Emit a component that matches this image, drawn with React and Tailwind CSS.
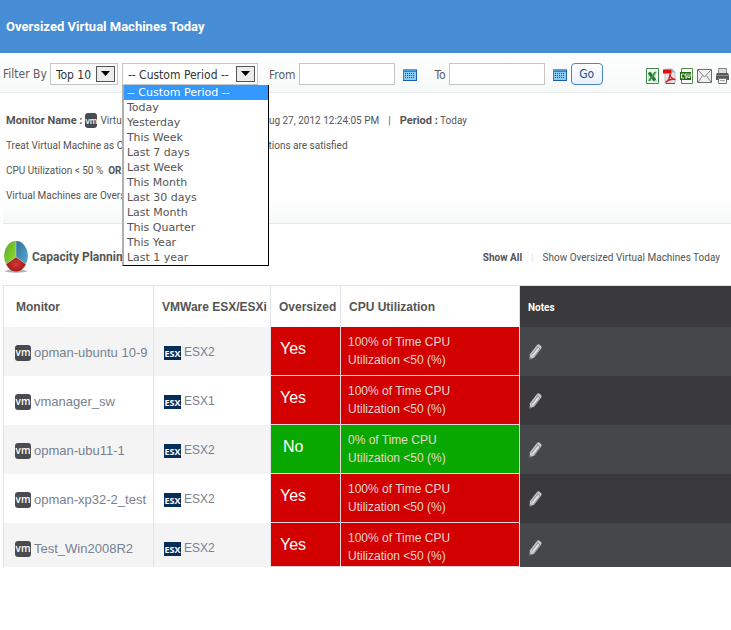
const periods = [
  "-- Custom Period --",
  "Today",
  "Yesterday",
  "This Week",
  "Last 7 days",
  "Last Week",
  "This Month",
  "Last 30 days",
  "Last Month",
  "This Quarter",
  "This Year",
  "Last 1 year",
];

const rows = [
  { monitor: "opman-ubuntu 10-9", host: "ESX2", oversized: true, time: "100%" },
  { monitor: "vmanager_sw", host: "ESX1", oversized: true, time: "100%" },
  { monitor: "opman-ubu11-1", host: "ESX2", oversized: false, time: "0%" },
  { monitor: "opman-xp32-2_test", host: "ESX2", oversized: true, time: "100%" },
  { monitor: "Test_Win2008R2", host: "ESX2", oversized: true, time: "100%" },
];

function VmIcon({ className }) {
  return (
    <span
      className={`inline-flex shrink-0 items-center justify-center rounded-[3px] bg-[#4a4b50] pb-px font-['Open_Sans',sans-serif] font-semibold text-white ${className}`}
    >
      vm
    </span>
  );
}

function EsxIcon() {
  return (
    <span className="inline-flex h-[14px] w-[17px] shrink-0 items-end justify-center overflow-hidden bg-[#052d5c] font-['Open_Sans',sans-serif] text-[9px] leading-[12px] font-bold text-white">
      ESX
    </span>
  );
}

function CalendarIcon() {
  return (
    <svg viewBox="0 0 14 12" className="h-3 w-[14px]" aria-hidden="true">
      <rect width="14" height="12" fill="#2f7fcb" />
      <rect x="1" y="3" width="12" height="8" fill="#8accf6" />
      <path d="M0 0H14V2H0Z" fill="#4e9fe2" />
      <path d="M0 11.5H14M13.5 1V12" stroke="#1d5ea8" />
      <path d="M2 4.5H12M2 6.5H12M2 8.5H12" stroke="#1d5593" strokeDasharray="1 1" />
    </svg>
  );
}

function PencilIcon() {
  return (
    <svg viewBox="0 0 13 16" className="h-4 w-[13px]" aria-hidden="true">
      <path d="M.6 15.6L.9 10.2L8 1Q9.2 -.2 10.6 .8L12 1.9Q13.2 3 12.2 4.5L5.4 13.4Z" fill="#c6c6c6" />
      <path d="M2.4 11L9 2.6M5 12.8L11.5 4.6" stroke="#8b8c8e" strokeWidth=".8" />
      <path d="M3.8 11.8L10.2 3.6" stroke="#f2f2f2" strokeWidth="1" />
      <path d="M8 2.6L11 5" stroke="#77787a" strokeWidth=".8" />
      <path d="M.6 15.6L.8 13.2L2.8 14.6Z" fill="#777" />
    </svg>
  );
}

function PieIcon() {
  return (
    <svg viewBox="0 0 24 32" className="h-8 w-6 shrink-0" aria-hidden="true">
      <defs>
        <linearGradient id="green" x1="0" y1="0" x2="1" y2="1">
          <stop offset="0" stopColor="#56a82c" />
          <stop offset="1" stopColor="#95e02c" />
        </linearGradient>
        <linearGradient id="blue" x1="0" y1="0" x2="1" y2="1">
          <stop offset="0" stopColor="#2c6f9c" />
          <stop offset="1" stopColor="#59aad2" />
        </linearGradient>
        <radialGradient id="red">
          <stop offset="0" stopColor="#d33a36" />
          <stop offset="1" stopColor="#a01a1a" />
        </radialGradient>
      </defs>
      <ellipse cx="12" cy="30.3" rx="11" ry="1.4" fill="#999" opacity=".8" />
      <path d="M12 16V0A11.5 15 0 0 0 2 23Z" fill="url(#green)" />
      <path d="M12 16V0A11.5 15 0 0 1 22 23Z" fill="url(#blue)" />
      <path d="M12 16L2 23A11.5 15 0 0 0 22 23Z" fill="url(#red)" />
      <path d="M12 0V16L2 23M12 16L22 23" fill="none" stroke="#d5e7cf" strokeWidth=".5" />
    </svg>
  );
}

function ExcelIcon() {
  return (
    <svg viewBox="0 0 13 16" className="h-4 w-[13px]" aria-hidden="true">
      <path d="M.5 .5H12.5V15.5H.5Z" fill="#f4faf4" stroke="#3b8a46" />
      <path d="M8 4H11M8 13H11" stroke="#a9cfae" />
      <path d="M2 4H10V13H2Z" fill="#cfe5d0" />
      <path d="M3 4.5L9 12.5" stroke="#26743a" strokeWidth="3" />
      <path d="M9.5 4L3 13" stroke="#3d9650" strokeWidth="2" />
    </svg>
  );
}

function PdfIcon() {
  return (
    <svg viewBox="0 0 13 16" className="h-4 w-[13px]" aria-hidden="true">
      <path d="M2 1H9L12 4V15.5H2Z" fill="#e6e6e6" stroke="#b0b0b0" strokeWidth=".7" />
      <path d="M9 1V4H12" fill="#ccc" stroke="#888" strokeWidth=".6" />
      <path d="M0 1.5H8.5V5.5H0Z" fill="#e00b0b" />
      <path d="M7 5.5C7 9 9 11 12.5 11.5C8 10.5 5 12 2.5 14.5C5 13 7 9.5 7 5.5Z" fill="none" stroke="#d5202a" strokeWidth="1.4" />
      <path d="M3 15.5H12" stroke="#555" />
    </svg>
  );
}

function CsvIcon() {
  return (
    <svg viewBox="0 0 13 16" className="h-4 w-[13px]" aria-hidden="true">
      <path d="M1.5 .5H12.5V15.5H1.5Z" fill="#fff" stroke="#4f8f43" />
      <path d="M0 4H11V12H0Z" fill="#226b17" />
      <path d="M4 6H1.5V10H4M7 6H5V8H7V10H4.8M8 5.5V9L9 10L10 9V5.5" fill="none" stroke="#fff" strokeWidth=".9" />
    </svg>
  );
}

function MailIcon() {
  return (
    <svg viewBox="0 0 15 14" className="h-[14px] w-[15px]" aria-hidden="true">
      <path d="M.5 .5H14.5V13.5H.5Z" fill="#f1f1f1" stroke="#6d6d6d" />
      <path d="M1 1L7.5 8L14 1M1 13L5.7 6.5M14 13L9.3 6.5" fill="none" stroke="#777" strokeWidth=".9" />
    </svg>
  );
}

function PrintIcon() {
  return (
    <svg viewBox="0 0 13 16" className="h-4 w-[13px]" aria-hidden="true">
      <path d="M2.5 .5H10.5V6H2.5Z" fill="#ddd" stroke="#888" />
      <path d="M1 5H12L13 7V12H0V7Z" fill="#58595b" />
      <path d="M0 7.5H13" stroke="#8d8d8d" />
      <path d="M2.5 10.5H10.5V15.5H2.5Z" fill="#f1f1f1" stroke="#777" />
      <path d="M4 12.5H9" stroke="#aaa" />
    </svg>
  );
}

const exportActions = [
  { label: "Export to Excel", icon: ExcelIcon },
  { label: "Export to PDF", icon: PdfIcon },
  { label: "Export to CSV", icon: CsvIcon },
  { label: "Send mail", icon: MailIcon },
  { label: "Print", icon: PrintIcon },
];

function SelectBox({ label, options, className }) {
  return (
    <div className={`relative h-[22px] border border-[#c5c5c5] bg-white ${className}`}>
      <select
        aria-label={label}
        className="h-full w-full appearance-none bg-transparent pt-[2px] pl-[5px] text-[12px] leading-4 text-[#333] outline-none"
      >
        {options.map((option) => (
          <option key={option}>{option}</option>
        ))}
      </select>
      <span className="pointer-events-none absolute top-[2px] right-[2px] flex h-4 w-[19px] items-center justify-center border border-[#555] bg-[#ececec]">
        <svg viewBox="0 0 9 5" className="h-[5px] w-[9px]" aria-hidden="true">
          <path d="M0 0H9L4.5 5Z" fill="#000" />
        </svg>
      </span>
    </div>
  );
}

function DateField({ id, label }) {
  return (
    <div className="flex items-center">
      <label htmlFor={id} className="mr-[3px] pt-[2px]">
        {label}
      </label>
      <input id={id} type="text" className="h-[22px] w-[96px] border border-[#c5c5c5] bg-white px-1" />
      <button type="button" aria-label={`Pick ${label} date`} className="ml-2 pt-[3px]">
        <CalendarIcon />
      </button>
    </div>
  );
}

function FilterBar() {
  return (
    <div className="flex h-10 items-center border-b border-[#e9ecec] bg-gradient-to-b from-white to-[#f7f9f9] pt-[2px] pr-[2px] pl-[3px] font-['DejaVu_Sans_Condensed','DejaVu_Sans',sans-serif] text-[12px] leading-4 text-[#5d5d5d]">
      <span className="mr-[3px] whitespace-nowrap">Filter By</span>
      <SelectBox label="Top" options={["Top 10"]} className="mr-1 w-[68px]" />
      <div className="relative mr-[11px]">
        <SelectBox label="Period" options={periods} className="w-[136px]" />
        <ul
          role="listbox"
          aria-label="Period options"
          className="absolute top-[22px] left-0 z-10 w-[147px] border-r border-b border-l-2 border-black border-l-[#b0b0b0] bg-white font-['DejaVu_Sans',sans-serif] text-[11px] leading-[15px] text-[#555]"
        >
          {periods.map((period, i) => (
            <li
              key={period}
              role="option"
              aria-selected={i === 0}
              className={`px-[3px] ${i === 0 ? "bg-[#3399ff] text-white" : ""}`}
            >
              {period}
            </li>
          ))}
        </ul>
      </div>
      <DateField id="from" label="From" />
      <div className="w-[18px]" />
      <DateField id="to" label="To" />
      <button
        type="button"
        className="ml-1 h-[22px] w-8 rounded-[4px] border border-[#4a86bd] bg-gradient-to-b from-white to-[#e6f0fb] text-[#1b4f91]"
      >
        Go
      </button>
      <div className="ml-auto flex items-center gap-1 pt-1">
        {exportActions.map(({ label, icon: Icon }) => (
          <button key={label} type="button" aria-label={label}>
            <Icon />
          </button>
        ))}
      </div>
    </div>
  );
}

function Summary() {
  return (
    <section className="ml-[3px] border-b border-[#e6e8e8] bg-gradient-to-b from-white from-80% to-[#f6f8f8] pt-[15px] pb-[15px] pl-[3px] leading-[25px] whitespace-nowrap">
      <p className="flex items-center">
        <b className="text-[11px]">Monitor Name :</b>
        <VmIcon className="mx-[3px] h-[15px] w-3 text-[8px]" />
        <span className="w-[94px]">Virtual Machines</span>
        <b className="w-[68px]">Generated At :</b>
        <span>Aug 27, 2012 12:24:05 PM</span>
        <span className="mx-[9px]">|</span>
        <span>
          <b className="text-[11px]">Period :</b> Today
        </span>
      </p>
      <p>Treat Virtual Machine as Oversized if all the following conditions are satisfied</p>
      <p>
        CPU Utilization &lt; 50 % &nbsp;<b>OR</b> Memory Usage
      </p>
      <p>Virtual Machines are Oversized if true for more than 90 %</p>
    </section>
  );
}

function OversizedTable() {
  return (
    <table className="w-full table-fixed border-collapse text-left font-['Liberation_Sans',Arial,sans-serif] text-[13px]">
      <colgroup>
        <col className="w-[150px]" />
        <col className="w-[117px]" />
        <col className="w-[70px]" />
        <col className="w-[179px]" />
        <col />
      </colgroup>
      <thead>
        <tr className="h-[41px] border-t border-[#dfe2e8] text-[12px] whitespace-nowrap text-[#555]">
          <th className="border-x border-[#dfe2e8] pt-[2px] pl-3">Monitor</th>
          <th className="border-r border-[#dfe2e8] pt-[2px] pl-2">VMWare ESX/ESXi</th>
          <th className="border-r border-[#dfe2e8] pt-[2px] pl-2">Oversized</th>
          <th className="border-r border-[#dfe2e8] pt-[2px] pl-2">CPU Utilization</th>
          <th className="bg-[#3a3a3d] pt-[2px] pl-2 font-['Roboto',sans-serif] text-[10px] text-white">Notes</th>
        </tr>
      </thead>
      <tbody>
        {rows.map(({ monitor, host, oversized, time }, i) => {
          const striped = i % 2 === 0;
          const light = striped ? "bg-[#f4f4f4]" : "bg-white";
          const status = oversized ? "bg-[#d30000]" : "bg-[#09a800]";

          return (
            <tr key={monitor} className="h-[49px] align-top text-[#788190] last:h-[44px]">
              <td className={`border-x border-[#dfe2e8] pt-[18px] pl-[11px] ${light}`}>
                <a href="#" className="flex items-center gap-[3px] leading-4 whitespace-nowrap">
                  <VmIcon className="h-4 w-4 text-[10px] leading-none" />
                  {monitor}
                </a>
              </td>
              <td className={`border-r border-[#dfe2e8] pt-[17px] pl-[10px] ${light}`}>
                <a href="#" className="flex items-end gap-[3px] text-[12px] leading-4">
                  <EsxIcon />
                  {host}
                </a>
              </td>
              <td className={`border-r border-b border-[#e9d5d8] pt-3 text-[16px] leading-5 text-white ${oversized ? "pl-[9px]" : "pl-3"} ${status}`}>
                {oversized ? "Yes" : "No"}
              </td>
              <td className={`border-r border-b border-[#e9d5d8] pt-[6px] pl-[7px] text-[12px] leading-[18px] text-[#e9d6d3] ${status}`}>
                {time} of Time CPU
                <br />
                Utilization &lt;50 (%)
              </td>
              <td className={`pt-[17px] pl-[9px] ${striped ? "bg-[#45484b]" : "bg-[#3a3a3d]"}`}>
                <button type="button" aria-label={`Edit notes for ${monitor}`}>
                  <PencilIcon />
                </button>
              </td>
            </tr>
          );
        })}
      </tbody>
    </table>
  );
}

export default function App() {
  return (
    <main className="min-h-screen bg-white font-['Roboto',sans-serif] text-[10px] text-[#555]">
      <header className="flex h-[53px] items-center bg-[#468dd5] px-[6px]">
        <h1 className="text-[13px] font-bold text-white">Oversized Virtual Machines Today</h1>
      </header>
      <FilterBar />
      <Summary />
      <div className="flex h-[61px] items-center pt-1 pr-[11px] pl-1">
        <PieIcon />
        <h2 className="ml-1 text-[12px] font-bold">Capacity Planning</h2>
        <nav className="ml-auto flex items-center pt-px">
          <a href="#" className="font-bold">
            Show All
          </a>
          <span className="mx-[9px] text-[#dde4ee]">|</span>
          <a href="#">Show Oversized Virtual Machines Today</a>
        </nav>
      </div>
      <div className="ml-[3px]">
        <OversizedTable />
      </div>
    </main>
  );
}
